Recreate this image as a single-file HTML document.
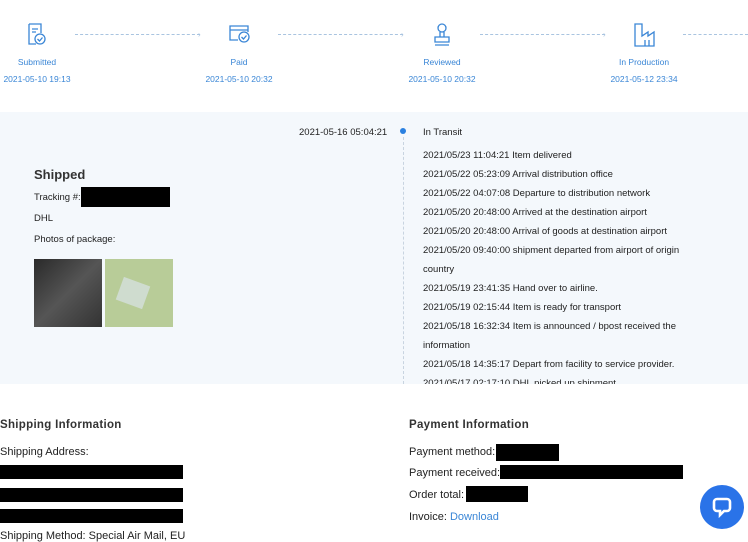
<!DOCTYPE html>
<html><head><style>
body{margin:0;width:748px;height:537px;overflow:hidden;background:#fff;font-family:"Liberation Sans",sans-serif;color:#222;position:relative}
.a{position:absolute;white-space:nowrap}
.step{font-size:8.5px;color:#3a86d6;text-align:center;width:100px}
.dash{position:absolute;top:34px;height:0;border-top:1px dashed #a9c4e0}
.ar{position:absolute;top:30px;color:#a9c4e0;font-size:8px}
.band{position:absolute;left:0;top:112px;width:748px;height:272px;background:#f4f8fc}
.t{font-size:9.5px;color:#222}
.b{position:absolute;background:#000}
.f{font-size:11px}
</style></head><body>
<svg class="a" style="left:26px;top:22px" width="22" height="26" viewBox="0 0 22 26" fill="none" stroke="#3a86d6" stroke-width="1.3"><path d="M3 2h12v9M3 2v20h7"/><path d="M6 7h6M6 10h4"/><circle cx="14" cy="17" r="5"/><path d="M11.5 17l2 2 3-3.5"/></svg>
<svg class="a" style="left:228px;top:24px" width="24" height="20" viewBox="0 0 24 20" fill="none" stroke="#3a86d6" stroke-width="1.3"><path d="M10 16H2V2h18v6"/><path d="M2 6h18"/><circle cx="16" cy="13" r="5"/><path d="M13.5 13l2 2 3-3.5"/></svg>
<svg class="a" style="left:432px;top:22px" width="20" height="26" viewBox="0 0 20 26" fill="none" stroke="#3a86d6" stroke-width="1.3"><circle cx="10" cy="6" r="4"/><path d="M8 10v5M12 10v5M3 15h14v5H3zM3 23h14"/></svg>
<svg class="a" style="left:632px;top:22px" width="24" height="26" viewBox="0 0 24 26" fill="none" stroke="#3a86d6" stroke-width="1.3"><path d="M3 2v22h19V10l-6 4v-4l-6 4V2z"/><path d="M13 18v6M17 18v6"/></svg>
<div class="dash" style="left:75px;width:125px"></div><span class="ar" style="left:198px">›</span>
<div class="dash" style="left:278px;width:125px"></div><span class="ar" style="left:401px">›</span>
<div class="dash" style="left:480px;width:125px"></div><span class="ar" style="left:603px">›</span>
<div class="dash" style="left:683px;width:65px"></div>
<div class="a step" style="left:-13px;top:57px">Submitted</div><div class="a step" style="left:-13px;top:74px">2021-05-10 19:13</div>
<div class="a step" style="left:189px;top:57px">Paid</div><div class="a step" style="left:189px;top:74px">2021-05-10 20:32</div>
<div class="a step" style="left:392px;top:57px">Reviewed</div><div class="a step" style="left:392px;top:74px">2021-05-10 20:32</div>
<div class="a step" style="left:594px;top:57px">In Production</div><div class="a step" style="left:594px;top:74px">2021-05-12 23:34</div>
<div class="band"></div>
<div class="a t" style="left:299px;top:127px">2021-05-16 05:04:21</div>
<div class="a" style="left:400px;top:128px;width:6px;height:6px;border-radius:50%;background:#2a80e0"></div>
<div class="a" style="left:403px;top:137px;height:247px;border-left:1px dashed #c8d4e0"></div>
<div class="a t" style="left:423px;top:127px">In Transit</div>
<div class="a t" style="left:423px;top:146px;line-height:19px">2021/05/23 11:04:21 Item delivered<br>2021/05/22 05:23:09 Arrival distribution office<br>2021/05/22 04:07:08 Departure to distribution network<br>2021/05/20 20:48:00 Arrived at the destination airport<br>2021/05/20 20:48:00 Arrival of goods at destination airport<br>2021/05/20 09:40:00 shipment departed from airport of origin<br>country<br>2021/05/19 23:41:35 Hand over to airline.<br>2021/05/19 02:15:44 Item is ready for transport<br>2021/05/18 16:32:34 Item is announced / bpost received the<br>information<br>2021/05/18 14:35:17 Depart from facility to service provider.<br>2021/05/17 02:17:10 DHL picked up shipment</div>
<div class="a" style="left:0;top:384px;width:748px;height:153px;background:#fff"></div>
<div class="a" style="left:34px;top:167px;font-size:13px;font-weight:bold;color:#333">Shipped</div>
<div class="a t" style="left:34px;top:192px">Tracking #:</div><div class="b" style="left:81px;top:187px;width:89px;height:20px"></div>
<div class="a t" style="left:34px;top:213px">DHL</div>
<div class="a t" style="left:34px;top:234px">Photos of package:</div>
<div class="a" style="left:34px;top:259px;width:68px;height:68px;background:linear-gradient(135deg,#2a2a2a,#555 50%,#333)"></div>
<div class="a" style="left:105px;top:259px;width:68px;height:68px;background:#b8cc98"><div style="position:absolute;left:14px;top:22px;width:28px;height:24px;background:#cfdccf;transform:rotate(20deg)"></div></div>
<div class="a" style="left:0;top:419px;font-size:11.5px;font-weight:bold;color:#333;letter-spacing:.3px">Shipping Information</div>
<div class="a f" style="left:0;top:446px">Shipping Address:</div>
<div class="b" style="left:0;top:465px;width:183px;height:14px"></div>
<div class="b" style="left:0;top:488px;width:183px;height:14px"></div>
<div class="b" style="left:0;top:509px;width:183px;height:14px"></div>
<div class="a f" style="left:0;top:530px">Shipping Method: Special Air Mail, EU</div>
<div class="a" style="left:409px;top:419px;font-size:11.5px;font-weight:bold;color:#333;letter-spacing:.3px">Payment Information</div>
<div class="a f" style="left:409px;top:446px">Payment method:</div><div class="b" style="left:496px;top:444px;width:63px;height:17px"></div>
<div class="a f" style="left:409px;top:467px">Payment received:</div><div class="b" style="left:500px;top:465px;width:183px;height:14px"></div>
<div class="a f" style="left:409px;top:489px">Order total:</div><div class="b" style="left:466px;top:486px;width:62px;height:16px"></div>
<div class="a f" style="left:409px;top:511px">Invoice: <span style="color:#3a86d6">Download</span></div>
<div class="a" style="left:700px;top:485px;width:44px;height:44px;border-radius:50%;background:#2a73e8"></div>
<svg class="a" style="left:711px;top:496px" width="22" height="22" viewBox="0 0 22 22" fill="none" stroke="#fff" stroke-width="2.6"><path d="M6 3h10a3 3 0 0 1 3 3v6a3 3 0 0 1-3 3h-3l-4 4v-4H6a3 3 0 0 1-3-3V6a3 3 0 0 1 3-3z"/></svg>
</body></html>
